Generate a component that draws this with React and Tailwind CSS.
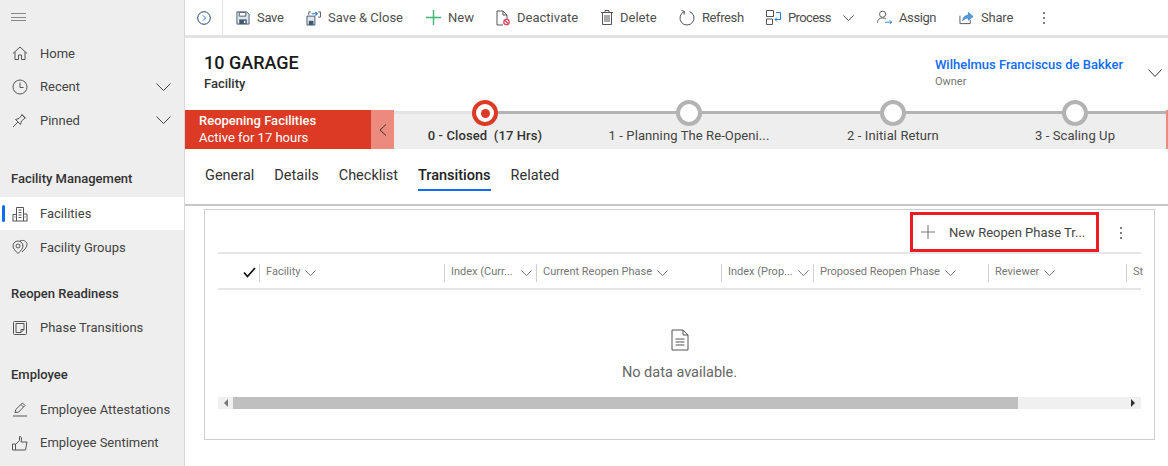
import React from "react";

const Svg = ({ children, w = 16, h = 16, className = "" }) => (
  <svg width={w} height={h} viewBox="0 0 16 16" fill="none" stroke="currentColor" strokeWidth="1" className={className}>
    {children}
  </svg>
);

// flat chevron, wider than the lucide one
const Chevron = ({ w = 11, h = 6, className = "" }) => (
  <svg width={w} height={h} viewBox="0 0 16 8" preserveAspectRatio="none" fill="none" stroke="currentColor" strokeWidth="1" className={`shrink-0 ${className}`}>
    <path d="M.5 .5 8 7.500 15.500 .5" vectorEffect="non-scaling-stroke" />
  </svg>
);

const HomeIcon = () => (
  <Svg><path d="M1 8.5 8 2l7 6.5M3 7v7.5h3.5V10h3v4.5H13V7" /></Svg>
);
const ClockIcon = () => (
  <Svg><circle cx="8" cy="8" r="7" /><path d="M8 3.5V8.5H11.5" /></Svg>
);
const PinIcon = () => (
  <Svg><path d="M1 15 6 10M3.5 7.5 8.5 12.5 9.5 9 13 6l-3-3-3 3.5z M9.5 2 14 6.5" /></Svg>
);
const BuildingIcon = () => (
  <Svg><path d="M4.5 15V1.5h7V15M1 15V8.5h3.5M11.5 8H15V15M.5 15h15M6.5 4h3M6.5 6.5h3M6.5 9h3M6.5 11.5h3M2.5 11h1M12.5 11h1" /></Svg>
);
const GroupsIcon = () => (
  <Svg><path d="M6 14.5C3.5 12 1 9.5 1 7a5 5 0 0 1 10 0c0 2.5-2.5 5-5 7.5z" /><circle cx="6" cy="7" r="2" /><path d="M8 2c3-1.500 7 0 7 3.500 0 2.500-2 4.500-5 7.500" /></Svg>
);
const NoteIcon = () => (
  <Svg><rect x="1.5" y="1.5" width="13" height="13" rx="1" /><path d="M4 3.5h8v6L9 12.5H4zM12 9.5H9v3" /></Svg>
);
const AttestIcon = () => (
  <Svg><path d="M1 15h14M3 11.5l.8-3L10.5 2 13 4.5l-6.500 6.700zM9 3.500 11.500 6" /></Svg>
);
const ThumbIcon = () => (
  <Svg><path d="M.5 9h3v6h-3zM3.5 9.5l4-4v-4c1.500 0 2 1 2 2.500L9 7h6l-1.500 8h-10" /></Svg>
);

const SaveIcon = () => (
  <svg width="14" height="14" viewBox="0 0 15 15" fill="none">
    <path d="M1 1h10.500L14 3.500V14H1z" fill="#dfe6ee" stroke="#44586c" />
    <path d="M3.500 1.500h7v4h-7z" fill="#fff" stroke="#44586c" />
    <path d="M3.500 9h8v5h-8z" fill="#44586c" />
    <path d="M8.500 10.500h1.500V13H8.500z" fill="#fff" />
  </svg>
);
const SaveCloseIcon = () => (
  <svg width="15" height="16" viewBox="0 0 16 16" fill="none">
    <path d="M1 6h8.500v9.500H1z" fill="#dfe6ee" stroke="#44586c" />
    <path d="M3 11h5v4.500H3z" fill="#44586c" />
    <path d="M3 1.500h2M13 1.500h2.500V7H13M3 1.500V5" stroke="#555" />
    <path d="M6 3.500h6M10 1.500l2 2-2 2" stroke="#2b7cd3" strokeWidth="1.200" />
  </svg>
);
const PlusIcon = ({ color, size = 15, weight = 1.2 }) => (
  <svg width={size} height={size} viewBox="0 0 16 16" stroke={color} strokeWidth={weight} className="shrink-0">
    <path d="M8 0v16M0 8h16" />
  </svg>
);
const DeactivateIcon = () => (
  <svg width="14" height="16" viewBox="0 0 14 16" fill="none">
    <path d="M7 15H1V1h6l4 4v4M7 1v4h4" stroke="#555" />
    <circle cx="10.500" cy="12" r="2.700" stroke="#e0455d" strokeWidth="1.300" fill="#fff" />
    <path d="M8.700 10.200 12.300 13.800" stroke="#e0455d" strokeWidth="1.300" />
  </svg>
);
const DeleteIcon = () => (
  <svg width="12" height="15" viewBox="0 0 12 15" fill="none" stroke="#555">
    <path d="M0 2.500h12M4 2.500V.5h4v2M1.500 2.500v12h9v-12M4 5v7M6 5v7M8 5v7" />
  </svg>
);
const RefreshIcon = () => (
  <svg width="16" height="16" viewBox="0 0 16 16" fill="none" stroke="#555">
    <path d="M5.500 1.500A7 7 0 1 0 10.500 1.500M2.500 .5 5.500 1.500 5 4.500" />
  </svg>
);
const ProcessIcon = () => (
  <svg width="15" height="15" viewBox="0 0 15 15" fill="none">
    <path d="M.5.500h7v6h-7zM.5 9h6v5.500h-6z" stroke="#555" />
    <path d="M10 2.500h4.500V9.500H9M11 7.500 9 9.500l2 2" stroke="#2b7cd3" />
  </svg>
);
const AssignIcon = () => (
  <svg width="15" height="15" viewBox="0 0 16 15" fill="none">
    <circle cx="6" cy="4" r="3.300" stroke="#555" />
    <path d="M.5 13c0-3 2-5 5.500-5 1.500 0 2.500.3 3.500 1" stroke="#555" />
    <path d="M8.500 12.500h7M13.500 10.500l2 2-2 2" stroke="#2b7cd3" />
  </svg>
);
const ShareIcon = () => (
  <svg width="15" height="15" viewBox="0 0 16 15" fill="none">
    <path d="M1 5.500V14h11V10" stroke="#555" />
    <path d="M4 11c0-4 3-6 6-6V2l5 4.500-5 4V8C7.500 8 5.500 9 4 11z" fill="#5b9bd5" stroke="#2b7cd3" strokeWidth=".7" />
  </svg>
);

const Dots = ({ className = "" }) => (
  <span className={`flex flex-col gap-[3px] ${className}`}>
    <i className="h-[2px] w-[2px] rounded-full bg-[#555]" />
    <i className="h-[2px] w-[2px] rounded-full bg-[#555]" />
    <i className="h-[2px] w-[2px] rounded-full bg-[#555]" />
  </span>
);

function NavRow({ icon, label, chevron, active, className = "" }) {
  return (
    <div className={`relative flex h-[33.5px] items-center pl-[11px] pt-[1px] text-[13px] text-[#444] ${active ? "bg-white" : ""} ${className}`}>
      {active && <span className="absolute left-[2px] top-[8px] h-[17px] w-[3px] rounded-sm bg-[#0f6cf5]" />}
      <span className="flex w-[18px] shrink-0 justify-center text-[#555]">{icon}</span>
      <span className="ml-[11px]">{label}</span>
      {chevron && <Chevron w={15} h={8} className="absolute left-[156px] text-[#444]" />}
    </div>
  );
}

const SectionTitle = ({ children, className = "" }) => (
  <div className={`flex h-[33px] items-center pl-[11px] pt-[2px] text-[13px] font-medium text-[#333] ${className}`}>{children}</div>
);

function Sidebar() {
  return (
    <aside className="h-full w-[185px] shrink-0 border-r border-[#d8d8d8] bg-[#eeeeee]">
      <div className="flex h-[36px] items-center pl-[11px] pb-[2px]">
        <div className="flex w-[15px] flex-col gap-[2.5px]">
          <span className="h-px bg-[#888]" />
          <span className="h-px bg-[#888]" />
          <span className="h-px bg-[#888]" />
        </div>
      </div>
      <NavRow icon={<HomeIcon />} label="Home" />
      <NavRow icon={<ClockIcon />} label="Recent" chevron />
      <NavRow icon={<PinIcon />} label="Pinned" chevron />
      <SectionTitle className="mt-[25px]">Facility Management</SectionTitle>
      <NavRow icon={<BuildingIcon />} label="Facilities" active className="mt-[2px]" />
      <NavRow icon={<GroupsIcon />} label="Facility Groups" />
      <SectionTitle className="mt-[13px]">Reopen Readiness</SectionTitle>
      <NavRow icon={<NoteIcon />} label="Phase Transitions" className="mt-[1px]" />
      <SectionTitle className="mt-[13px]">Employee</SectionTitle>
      <NavRow icon={<AttestIcon />} label="Employee Attestations" className="mt-[2px]" />
      <NavRow icon={<ThumbIcon />} label="Employee Sentiment" />
    </aside>
  );
}

function ToolItem({ icon, label, width, textClass = "" }) {
  return (
    <div className="flex items-center gap-[7px] text-[13px] text-[#505050]">
      {icon}
      <span className={`whitespace-nowrap ${textClass}`} style={{ width }}>{label}</span>
    </div>
  );
}

function Toolbar() {
  return (
    <div className="flex h-[38px] shrink-0 items-center border-b-[3px] border-[#e3e3e3] text-[#505050]">
      <div className="flex h-full w-[38px] shrink-0 items-center justify-center border-r border-[#e3e3e3]">
        <svg width="14" height="14" viewBox="0 0 14 14" fill="none">
          <circle cx="7" cy="7" r="6.300" stroke="#24456b" />
          <path d="M5.800 4.200 8.600 7 5.800 9.800" stroke="#2b7cd3" />
        </svg>
      </div>
      <div className="ml-[13px] flex items-center gap-[23px]">
        <ToolItem icon={<SaveIcon />} label="Save" width={26} textClass="tracking-[-0.3px]" />
        <ToolItem icon={<SaveCloseIcon />} label="Save & Close" width={75} />
        <ToolItem icon={<PlusIcon color="#3fb56f" weight={1.5} />} label="New" width={25} />
        <ToolItem icon={<DeactivateIcon />} label="Deactivate" width={61} />
        <ToolItem icon={<DeleteIcon />} label="Delete" width={36} />
        <ToolItem icon={<RefreshIcon />} label="Refresh" width={41} textClass="tracking-[-0.4px]" />
        <div className="flex items-center gap-[14px]">
          <ToolItem icon={<ProcessIcon />} label="Process" width={41} textClass="tracking-[-0.6px]" />
          <Chevron w={11} h={6} />
        </div>
        <ToolItem icon={<AssignIcon />} label="Assign" width={37} textClass="tracking-[-0.4px]" />
        <ToolItem icon={<ShareIcon />} label="Share" width={31} textClass="tracking-[-0.2px]" />
        <Dots className="ml-[8px]" />
      </div>
    </div>
  );
}

function RecordHeader() {
  return (
    <div className="flex h-[72px] shrink-0 items-start justify-between pl-[19px]">
      <div className="pt-[13px]">
        <div className="text-[18px] font-medium leading-[24px] text-[#1a1a1a]">10 GARAGE</div>
        <div className="text-[13px] font-medium leading-[18px] text-[#333]">Facility</div>
      </div>
      <div className="flex pt-[18px]">
        <div>
          <div className="text-[13px] font-medium leading-[18px] text-[#0f6cf5]">Wilhelmus Franciscus de Bakker</div>
          <div className="text-[11px] leading-[15px] text-[#777]">Owner</div>
        </div>
        <Chevron w={14} h={8} className="ml-[25px] mr-[6px] mt-[13px] text-[#333]" />
      </div>
    </div>
  );
}

function Stage({ label, width, active, before }) {
  return (
    <div className="relative flex shrink-0 flex-col items-center" style={{ width }}>
      <span className="absolute left-0 right-1/2 -top-[2px] h-[3px]" style={{ background: before }} />
      <span className="absolute left-1/2 right-0 -top-[2px] h-[3px] bg-[#b3b3b3]" />
      <span
        className={`relative z-10 -mt-[13px] flex h-[26px] w-[26px] items-center justify-center rounded-full border-[4px] bg-white ${active ? "border-[#dc3a24]" : "border-[#b3b3b3]"}`}
      >
        {active && <span className="h-[9px] w-[9px] rounded-full bg-[#dc3a24]" />}
      </span>
      <span className={`mt-[1px] whitespace-pre text-[13px] leading-[18px] tracking-[0.1px] ${active ? "font-medium text-[#333]" : "text-[#444]"}`}>{label}</span>
    </div>
  );
}

function ProcessBar() {
  return (
    <div className="flex h-[39px] shrink-0 bg-[#eeeeee]">
      <div className="flex h-full w-[186px] shrink-0 flex-col justify-center bg-[#dc3a24] pb-[2px] pl-[14px] text-white">
        <div className="text-[13px] font-medium leading-[17px]">Reopening Facilities</div>
        <div className="text-[13px] leading-[17px]">Active for 17 hours</div>
      </div>
      <div className="flex h-full w-[23px] shrink-0 items-center justify-center bg-[#ec8b7d]">
        <svg width="8" height="12" viewBox="0 0 8 12" fill="none" stroke="#333">
          <path d="M7 .5 1 6l6 5.500" />
        </svg>
      </div>
      <div className="flex min-w-0 flex-1 border-t-[3px] border-white">
        <Stage label="0 - Closed  (17 Hrs)" width={182} active before="#e3e3e3" />
        <Stage label="1 - Planning The Re-Openi..." width={226} before="#b3b3b3" />
        <Stage label="2 - Initial Return" width={182} before="#b3b3b3" />
        <Stage label="3 - Scaling Up" width={182} before="#b3b3b3" />
      </div>
      <div className="w-[2px] shrink-0 bg-[#ec8b7d]" />
    </div>
  );
}

function Tabs() {
  return (
    <div className="flex h-[57px] shrink-0 gap-[20px] border-b-2 border-[#c8c8c8] pl-[20px] pt-[16px] text-[14.5px] text-[#333]">
      <span>General</span>
      <span>Details</span>
      <span>Checklist</span>
      <span className="h-[26px] border-b-2 border-[#0f6cf5] font-medium text-[#222]">Transitions</span>
      <span>Related</span>
    </div>
  );
}

function HeaderCell({ label, width, chevron = true, spread }) {
  return (
    <div className={`mt-[3px] flex h-[18px] shrink-0 items-center border-l border-[#d0d0d0] pl-[6px] pr-[4px] ${spread ? "justify-between" : "gap-[5px]"}`} style={{ width }}>
      <span className="whitespace-nowrap">{label}</span>
      {chevron && <Chevron w={11} h={6} />}
    </div>
  );
}

function TransitionsPanel() {
  return (
    <div className="ml-[19px] mt-[3px] h-[231px] w-[951px] border border-[#cfcfcf] px-[13px]">
      <div className="flex h-[42px] items-start">
        <div className="ml-[692px] mt-[2px] flex h-[40px] w-[189px] shrink-0 items-center border-[3px] border-[#ed1c24] pl-[8px] text-[13px] text-[#444]">
          <PlusIcon color="#777" size={14} />
          <span className="ml-[14px] translate-y-[1px] whitespace-nowrap">New Reopen Phase Tr...</span>
        </div>
        <Dots className="ml-[21px] mt-[17px]" />
      </div>
      <div className="flex h-[38px] items-center border-y-2 border-[#e6e6e6] text-[11px] text-[#777]">
        <div className="mt-[2px] flex w-[41px] shrink-0 justify-end pr-[3px]">
          <svg width="13" height="11" viewBox="0 0 13 11" fill="none" stroke="#111" strokeWidth="1.800">
            <path d="M1 5.500 4.500 9.500 12 1" />
          </svg>
        </div>
        <HeaderCell label="Facility" width={185} />
        <HeaderCell label="Index (Curr..." width={92} spread />
        <HeaderCell label="Current Reopen Phase" width={185} />
        <HeaderCell label="Index (Prop..." width={92} spread />
        <HeaderCell label="Proposed Reopen Phase" width={175} />
        <HeaderCell label="Reviewer" width={138} />
        <HeaderCell label="St" width={15} chevron={false} />
      </div>
      <div className="flex h-[107px] flex-col items-center pt-[39px]">
        <svg width="18" height="22" viewBox="0 0 18 22" fill="none" stroke="#555">
          <path d="M1 1h11l5 5v15H1zM12 1v5h5" />
          <path d="M4.500 10h9M4.500 13h9M4.500 16h9" />
        </svg>
        <div className="mt-[12px] text-[14.5px] leading-[20px] text-[#666]">No data available.</div>
      </div>
      <div className="flex h-[12px] items-center bg-[#f0f0f0]">
        <span className="ml-[6px] h-0 w-0 border-y-[4px] border-r-[4px] border-y-transparent border-r-[#777]" />
        <div className="ml-[5px] h-full w-[785px] bg-[#bfbfbf]" />
        <span className="ml-[113px] h-0 w-0 border-y-[4px] border-l-[4px] border-y-transparent border-l-[#333]" />
      </div>
    </div>
  );
}

export default function App() {
  return (
    <div className="flex h-[466px] w-[1168px] overflow-hidden bg-white font-['Roboto','Noto_Sans',sans-serif]">
      <Sidebar />
      <main className="flex min-w-0 flex-1 flex-col">
        <Toolbar />
        <RecordHeader />
        <ProcessBar />
        <Tabs />
        <TransitionsPanel />
      </main>
    </div>
  );
}
